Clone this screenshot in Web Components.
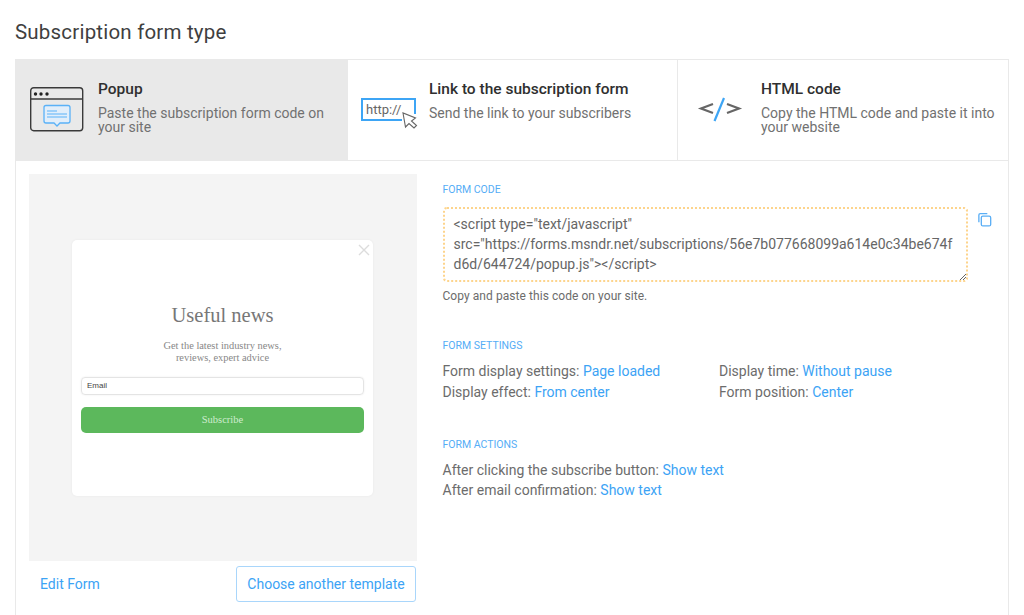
<!DOCTYPE html>
<html><head><meta charset="utf-8"><style>
html,body{margin:0;padding:0;background:#fff;overflow:hidden;height:615px}
body{font-family:Roboto,"Liberation Sans",sans-serif}
</style></head><body>
<sub-page></sub-page>
<script>
function def(name,html){customElements.define(name,class extends HTMLElement{constructor(){super();this.attachShadow({mode:'open'}).innerHTML=html}})}
def('type-tab',`<style>
:host{display:flex;flex:1 1 0;box-sizing:border-box;height:100px;padding:20px 12px 0 14px;gap:14px;color:#666;background:#fff}
:host([active]){background:#e9e9e9}
.i{flex:none;width:54px;display:flex;align-items:flex-start}
h3{margin:0;font:500 15.5px/18px Roboto,sans-serif;color:#2f2f2f}
p{margin:8px 0 0;font:14px/14px Roboto,sans-serif;color:#717171}
</style><div class="i"><slot name="icon"></slot></div><div><h3><slot name="t"></slot></h3><p><slot name="d"></slot></p></div>`);
def('preview-popup',`<style>
:host{display:flex;align-items:center;justify-content:center;width:388px;height:387px;background:#f4f4f4;flex:none;padding-top:1px;box-sizing:border-box}
.c{position:relative;width:301px;height:256px;margin-right:1px;background:#fff;border-radius:5px;box-shadow:0 0 3px rgba(0,0,0,.05);box-sizing:border-box;padding:0 9px;text-align:center;font-family:"Liberation Serif",serif;display:flex;flex-direction:column}
.x{position:absolute;right:3px;top:4px;width:12px;height:12px}
h2{margin:63px 0 0;font:400 20.5px/24px "Liberation Serif",serif;color:#777}
p{margin:13px 0 0;font:10.4px/12px "Liberation Serif",serif;color:#888}
.f{margin-top:13px;height:18px;border:1px solid #e4e4e4;border-radius:4px;box-sizing:border-box;text-align:left;padding-left:5px;font:8px/16px "Liberation Sans",sans-serif;color:#444;box-shadow:0 0 2px rgba(0,0,0,.08)}
.b{margin-top:12px;height:26px;background:#5cb85c;border-radius:5px;color:#cfeccf;font:10.5px/26px "Liberation Serif",serif}
</style><div class="c"><svg class="x" viewBox="0 0 12 12"><path d="M1 1l10 10M11 1L1 11" stroke="#dcdcdc" stroke-width="1.4" fill="none"/></svg>
<h2>Useful news</h2><p>Get the latest industry news,<br>reviews, expert advice</p><div class="f">Email</div><div class="b">Subscribe</div></div>`);
def('code-box',`<style>
:host{display:block}
.r{display:flex;gap:9px;align-items:flex-start}
.a{position:relative;box-sizing:border-box;width:525px;height:75px;border:2px dotted #fdd48c;border-radius:4px;padding:5px 9px;font:14px/20px Roboto,sans-serif;color:#666;word-break:break-all}
.g{position:absolute;right:0;bottom:0;width:7px;height:7px}
svg.c{margin-top:5px}
small{display:block;margin-top:7px;font:12px/14px Roboto,sans-serif;letter-spacing:.06px;color:#6c6c6c}
</style><div class="r"><div class="a"><slot></slot><svg class="g" viewBox="0 0 7 7"><path d="M1 7L7 1M4 7L7 4" stroke="#666" stroke-width="1"/></svg></div>
<svg class="c" width="15" height="15" viewBox="0 0 16 16" fill="none" stroke="#5aaef5" stroke-width="1.4"><path d="M2 11V3.2A1.500 1.500 0 0 1 3.500 1.700H11"/><rect x="4.600" y="4.400" width="10" height="10.400" rx="1.600"/></svg></div>
<small>Copy and paste this code on your site.</small>`);
def('sec-label',`<style>:host{display:block;font:10.5px/12px Roboto,sans-serif;color:#55adf6;text-transform:uppercase}</style><slot></slot>`);
def('kv-line',`<style>:host{display:block;font:14px/20.5px Roboto,sans-serif;color:#6c6c6c;white-space:nowrap}::slotted(a){color:#3ca3f5;text-decoration:none}</style><slot></slot>`);
def('sub-page',`<style>
:host{display:block;height:615px;overflow:hidden;box-sizing:border-box;padding:19px 15px 0}
h1{margin:0 0 14px;font:400 20.5px/26px Roboto,sans-serif;letter-spacing:.2px;color:#3f3f3f}
.box{border:1px solid #e9e9e9;border-bottom:0;height:600px;box-sizing:border-box}
.tabs{display:flex;border-bottom:1px solid #e9e9e9}
type-tab+type-tab{border-left:1px solid #e9e9e9}
type-tab:nth-child(1){flex:0 0 331px}
type-tab:nth-child(2){flex:0 0 330px;padding-left:13px}
type-tab:nth-child(3){padding-left:15px}
.body{display:flex;padding:13px 13px 0 13px;gap:25.5px}
.l{width:388px;flex:none}
.foot{display:flex;justify-content:space-between;padding:5px 1px 0 11px}
.e{font:14px/20px Roboto,sans-serif;color:#3ca3f5;margin-top:8px}
.btn{box-sizing:border-box;width:180px;height:36px;border:1px solid #a9d6fb;border-radius:3px;text-align:center;font:14px/34px Roboto,sans-serif;color:#3ca3f5}
.rt{flex:1;padding-top:10px}
.two{display:grid;grid-template-columns:276.5px 1fr;margin-top:9px}
a{color:#3ca3f5;text-decoration:none}
.code{white-space:pre-wrap}
</style>
<h1>Subscription form type</h1>
<div class="box">
 <div class="tabs">
  <type-tab active>
   <svg slot="icon" width="54" height="46" viewBox="0 0 54 46" fill="none" style="margin-top:7px"><rect x=".7" y=".7" width="52" height="43" rx="3" stroke="#3a3a3a" stroke-width="1.400"/><path d="M1 12H53" stroke="#3a3a3a" stroke-width="1.600"/><circle cx="5.500" cy="7" r="1.700" fill="#222"/><circle cx="11" cy="7" r="1.700" fill="#222"/><circle cx="17" cy="7" r="1.700" fill="#222"/><path d="M16 18.500h22a2 2 0 0 1 2 2v13.500a2 2 0 0 1-2 2H30l-3 3-3-3h-8a2 2 0 0 1-2-2V20.500a2 2 0 0 1 2-2z" stroke="#5ab1f7" stroke-width="1.300" fill="#e2eefa"/><path d="M17 24h10M17 27h20M17 30h20" stroke="#5ab1f7" stroke-width="1.200"/></svg>
   <span slot="t">Popup</span><span slot="d">Paste the subscription form code on your site</span></type-tab>
  <type-tab>
   <svg slot="icon" width="57" height="46" viewBox="0 0 57 46" fill="none" style="margin-top:18px;flex:none"><path d="M41 22H1V1H54V16" stroke="#3da5f5" stroke-width="2"/><text x="5" y="16" font-family="Roboto,sans-serif" font-size="13" fill="#666">http://</text><path d="M42 15l2.500 14 3.500-3.500 5 4.500 2.500-2.500-5-4.500 4-3z" fill="#fff" stroke="#666" stroke-width="1.100"/></svg>
   <span slot="t">Link to the subscription form</span><span slot="d">Send the link to your subscribers</span></type-tab>
  <type-tab>
   <svg slot="icon" width="54" height="30" viewBox="0 0 54 30" fill="none" style="margin-top:17px"><path d="M20 7L8 11.500l12 4.500" stroke="#666" stroke-width="2.200"/><path d="M34 7l12 4.500L34 16" stroke="#666" stroke-width="2.200"/><path d="M31 1L21.500 24" stroke="#3da5f5" stroke-width="2.200"/></svg>
   <span slot="t">HTML code</span><span slot="d">Copy the HTML code and paste it into your website</span></type-tab>
 </div>
 <div class="body">
  <div class="l"><preview-popup></preview-popup>
   <div class="foot"><div class="e">Edit Form</div><div class="btn">Choose another template</div></div></div>
  <div class="rt">
   <sec-label>Form code</sec-label>
   <code-box style="margin-top:11px"><span class="code">&lt;script type="text/javascript"
src="https://forms.msndr.net/subscriptions/56e7b077668099a614e0c34be674fd6d/644724/popup.js"&gt;&lt;/script&gt;</span></code-box>
   <sec-label style="margin-top:37px">Form settings</sec-label>
   <div class="two">
    <kv-line>Form display settings: <a>Page loaded</a></kv-line><kv-line>Display time: <a>Without pause</a></kv-line>
    <kv-line>Display effect: <a>From center</a></kv-line><kv-line>Form position: <a>Center</a></kv-line>
   </div>
   <sec-label style="margin-top:37px">Form actions</sec-label>
   <kv-line style="margin-top:9px;line-height:20px">After clicking the subscribe button: <a>Show text</a></kv-line>
   <kv-line style="line-height:20px">After email confirmation: <a>Show text</a></kv-line>
  </div>
 </div>
</div>`);
</script>
</body></html>
